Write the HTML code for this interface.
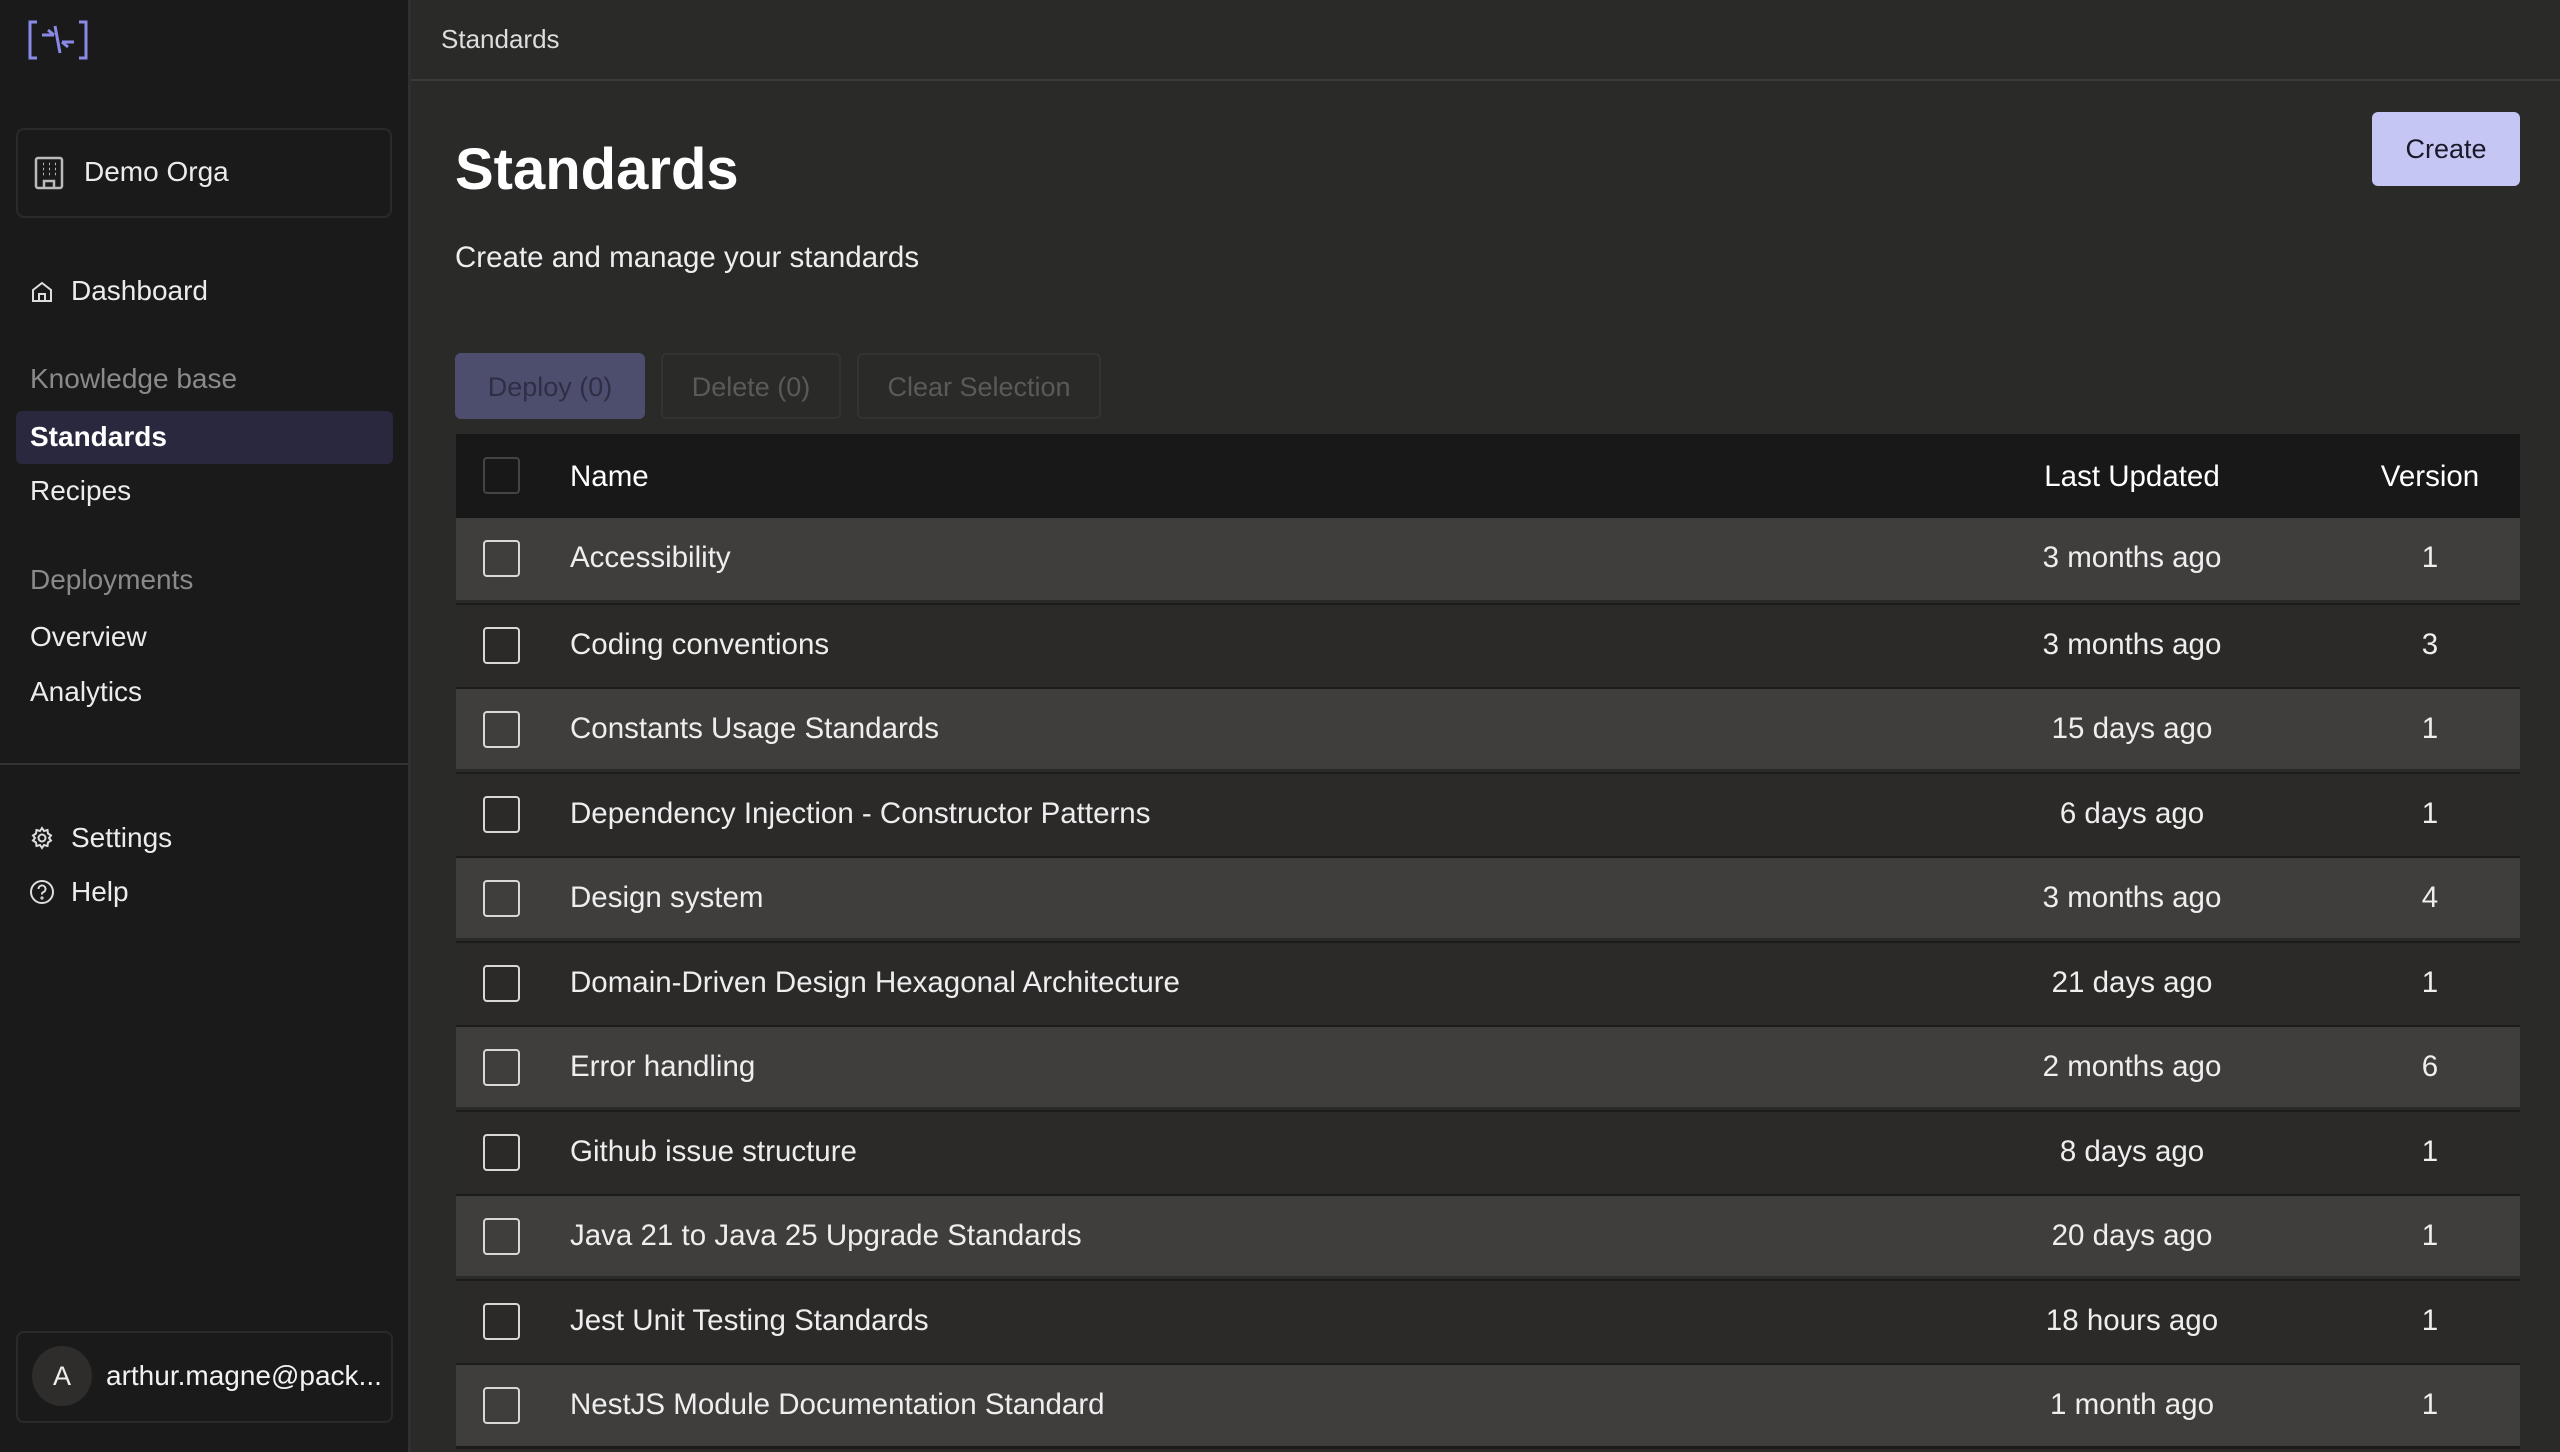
<!DOCTYPE html>
<html><head><meta charset="utf-8"><style>
*{box-sizing:border-box;margin:0;padding:0}
body{width:2560px;height:1452px;overflow:hidden;background:#2a2a29;font-family:"Liberation Sans",sans-serif;color:#eee;position:relative}
.sb{position:absolute;left:0;top:0;width:411px;height:1452px;background:#1a1a1a;border-right:3px solid #303030}
.abs{position:absolute}
.nav{position:absolute;left:30px;font-size:28px;color:#ececec}
.sec{position:absolute;left:30px;font-size:28px;color:#8a8a8a}
.hdr{position:absolute;left:411px;top:0;right:0;height:81px;border-bottom:2px solid #3a3a3a}
.row{position:absolute;left:456px;width:2064px;height:82px;font-size:29.5px}
.cb{position:absolute;left:27px;top:22px;width:37px;height:37px;border:2px solid #d8d8d8;border-radius:4px}
.nm{position:absolute;left:114px;top:23px}
.lu{position:absolute;left:1576px;width:200px;text-align:center;top:23px;white-space:nowrap}
.vr{position:absolute;left:1924px;width:100px;text-align:center;top:23px}
.btn{position:absolute;top:353px;height:66px;border-radius:6px;font-size:27px;color:#5a5a5a;text-align:center;line-height:64px;border:2px solid #333}
</style></head><body>
<div class="sb">
 <svg class="abs" style="left:27px;top:20px" width="62" height="40" viewBox="0 0 62 40" fill="none" stroke="#8a8ae6" stroke-width="3">
  <path d="M10 2H3V38H10M52 2H59V38H52"/>
  <path d="M15 15H27M21 10L27 15M47 22H35M41 27L35 22M28 6L33 33"/>
 </svg>
 <div class="abs" style="left:16px;top:128px;width:376px;height:90px;border:2px solid #2a2a2a;border-radius:8px"></div>
 <svg class="abs" style="left:34px;top:156px" width="30" height="34" viewBox="0 0 30 34" fill="none" stroke="#bbb" stroke-width="2.5"><rect x="2" y="2" width="26" height="30" rx="2"/><path d="M10 32V25H20V32"/><path d="M9 8h1M15 8h1M21 8h1M9 13h1M15 13h1M21 13h1M9 18h1M15 18h1M21 18h1"/></svg>
 <div class="nav" style="left:84px;top:156px">Demo Orga</div>
 <svg class="abs" style="left:30px;top:280px" width="24" height="24" viewBox="0 0 24 24" fill="none" stroke="#ddd" stroke-width="2"><path d="M3 10L12 3L21 10V21H3Z"/><path d="M9 21V14H15V21"/></svg>
 <div class="nav" style="left:71px;top:275px">Dashboard</div>
 <div class="sec" style="top:363px">Knowledge base</div>
 <div class="abs" style="left:16px;top:411px;width:377px;height:53px;background:#29283e;border-radius:6px"></div>
 <div class="nav" style="top:421px;font-weight:bold;color:#fff">Standards</div>
 <div class="nav" style="top:475px">Recipes</div>
 <div class="sec" style="top:564px">Deployments</div>
 <div class="nav" style="top:621px">Overview</div>
 <div class="nav" style="top:676px">Analytics</div>
 <div class="abs" style="left:0;top:763px;width:408px;height:2px;background:#333"></div>
 <svg class="abs" style="left:30px;top:826px" width="24" height="24" viewBox="0 0 24 24" fill="none" stroke="#ddd" stroke-width="2"><circle cx="12" cy="12" r="3.5"/><path d="M12 2l2 3 3.5-1 .5 3.5 3 2-2 2.5 2 2.5-3 2-.5 3.5-3.5-1-2 3-2-3-3.5 1-.5-3.5-3-2 2-2.5-2-2.5 3-2 .5-3.5 3.5 1z"/></svg>
 <div class="nav" style="left:71px;top:822px">Settings</div>
 <svg class="abs" style="left:29px;top:879px" width="26" height="26" viewBox="0 0 26 26" fill="none" stroke="#ddd" stroke-width="2"><circle cx="13" cy="13" r="11"/><path d="M9.5 10a3.5 3.5 0 1 1 4.5 3.3c-1 .4-1 1-1 2.2"/><circle cx="13" cy="19" r=".6"/></svg>
 <div class="nav" style="left:71px;top:876px">Help</div>
 <div class="abs" style="left:16px;top:1331px;width:377px;height:92px;border:2px solid #2a2a2a;border-radius:8px"></div>
 <div class="abs" style="left:32px;top:1346px;width:60px;height:60px;border-radius:50%;background:#2e2d2b;color:#eee;font-size:27px;text-align:center;line-height:60px">A</div>
 <div class="nav" style="left:106px;top:1360px;color:#f2f2f2">arthur.magne@pack...</div>
</div>
<div class="hdr"><div class="abs" style="left:30px;top:24px;font-size:26px;color:#ddd">Standards</div></div>
<div class="abs" style="left:455px;top:136px;font-size:58px;font-weight:bold;color:#fff">Standards</div>
<div class="abs" style="left:455px;top:241px;font-size:29.5px;color:#eee">Create and manage your standards</div>
<div class="abs" style="left:2372px;top:112px;width:148px;height:74px;background:#c6c6f5;border-radius:6px;color:#1a1a2a;font-size:27px;text-align:center;line-height:74px">Create</div>
<div class="btn" style="left:455px;width:190px;background:#4d4e6e;border-color:#4d4e6e;color:#2e2f45">Deploy (0)</div>
<div class="btn" style="left:661px;width:180px">Delete (0)</div>
<div class="btn" style="left:857px;width:244px">Clear Selection</div>
<div class="row" style="top:434px;height:84px;background:#181818;color:#fff">
 <div class="cb" style="top:23px;border-color:#444"></div>
 <div class="nm" style="top:26px">Name</div><div class="lu" style="top:26px">Last Updated</div><div class="vr" style="top:26px">Version</div>
</div>
<div class="row" style="top:518px;background:#403e3d"><div class="cb"></div><div class="nm">Accessibility</div><div class="lu">3 months ago</div><div class="vr">1</div></div>
<div class="row" style="top:603px;background:#2b2a29;border-top:2px solid #1c1c1c"><div class="cb"></div><div class="nm">Coding conventions</div><div class="lu">3 months ago</div><div class="vr">3</div></div>
<div class="row" style="top:687px;background:#403e3d;border-top:2px solid #1c1c1c"><div class="cb"></div><div class="nm">Constants Usage Standards</div><div class="lu">15 days ago</div><div class="vr">1</div></div>
<div class="row" style="top:772px;background:#2b2a29;border-top:2px solid #1c1c1c"><div class="cb"></div><div class="nm">Dependency Injection - Constructor Patterns</div><div class="lu">6 days ago</div><div class="vr">1</div></div>
<div class="row" style="top:856px;background:#403e3d;border-top:2px solid #1c1c1c"><div class="cb"></div><div class="nm">Design system</div><div class="lu">3 months ago</div><div class="vr">4</div></div>
<div class="row" style="top:941px;background:#2b2a29;border-top:2px solid #1c1c1c"><div class="cb"></div><div class="nm">Domain-Driven Design Hexagonal Architecture</div><div class="lu">21 days ago</div><div class="vr">1</div></div>
<div class="row" style="top:1025px;background:#403e3d;border-top:2px solid #1c1c1c"><div class="cb"></div><div class="nm">Error handling</div><div class="lu">2 months ago</div><div class="vr">6</div></div>
<div class="row" style="top:1110px;background:#2b2a29;border-top:2px solid #1c1c1c"><div class="cb"></div><div class="nm">Github issue structure</div><div class="lu">8 days ago</div><div class="vr">1</div></div>
<div class="row" style="top:1194px;background:#403e3d;border-top:2px solid #1c1c1c"><div class="cb"></div><div class="nm">Java 21 to Java 25 Upgrade Standards</div><div class="lu">20 days ago</div><div class="vr">1</div></div>
<div class="row" style="top:1279px;background:#2b2a29;border-top:2px solid #1c1c1c"><div class="cb"></div><div class="nm">Jest Unit Testing Standards</div><div class="lu">18 hours ago</div><div class="vr">1</div></div>
<div class="row" style="top:1363px;background:#403e3d;border-top:2px solid #1c1c1c;border-bottom:3px solid #1c1c1c;height:86px"><div class="cb"></div><div class="nm">NestJS Module Documentation Standard</div><div class="lu">1 month ago</div><div class="vr">1</div></div>
</body></html>
